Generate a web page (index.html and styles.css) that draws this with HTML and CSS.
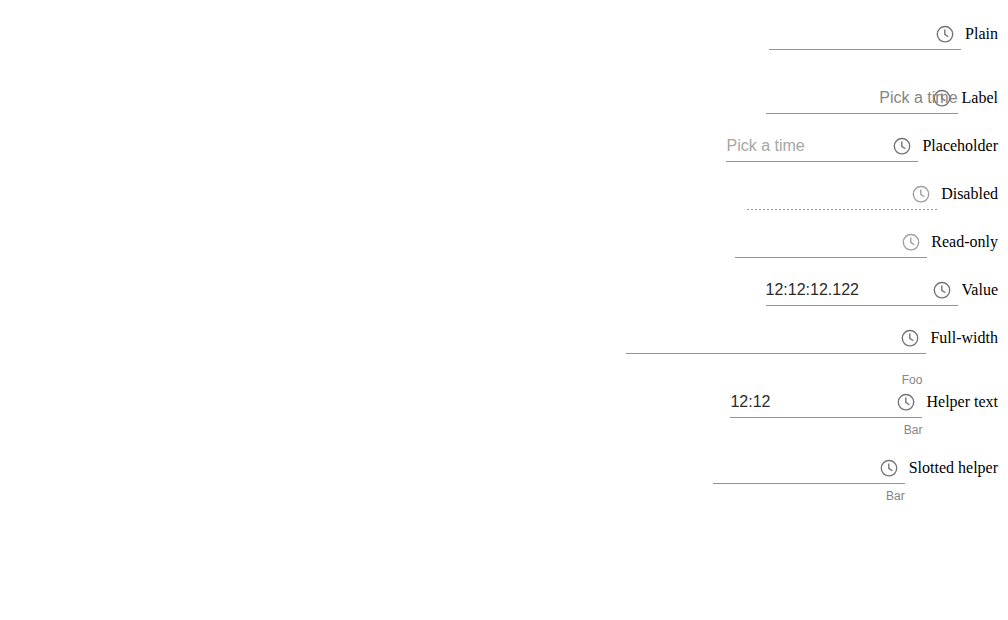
FILE: index.html
```
<!DOCTYPE html>
<html lang="en" dir="rtl">
<head>
<meta charset="utf-8">
<title>Time picker</title>
<link rel="stylesheet" href="styles.css">
</head>
<body>
<svg width="0" height="0" class="defs"><symbol id="clock" viewBox="0 0 20 20"><circle cx="10" cy="10.2" r="7.7"/><path d="M9.8 5.6v4.7l3.5 2.5"/></symbol></svg>
<main class="list">
<div class="row"><span class="name">Plain</span><div class="field"><svg class="icon"><use href="#clock"/></svg></div></div>
<div class="row labelled"><span class="name">Label</span><div class="field"><svg class="icon"><use href="#clock"/></svg><span class="label">Pick a time</span></div></div>
<div class="row"><span class="name">Placeholder</span><div class="field"><svg class="icon"><use href="#clock"/></svg><span class="value placeholder">Pick a time</span></div></div>
<div class="row"><span class="name">Disabled</span><div class="field disabled"><svg class="icon"><use href="#clock"/></svg></div></div>
<div class="row"><span class="name">Read-only</span><div class="field readonly"><svg class="icon"><use href="#clock"/></svg></div></div>
<div class="row"><span class="name">Value</span><div class="field"><svg class="icon"><use href="#clock"/></svg><span class="value">12:12:12.122</span></div></div>
<div class="row"><span class="name">Full-width</span><div class="field full"><svg class="icon"><use href="#clock"/></svg></div></div>
<div class="row helper-row"><span class="name">Helper text</span><div class="field"><svg class="icon"><use href="#clock"/></svg><span class="value">12:12</span><span class="above">Foo</span><span class="helper">Bar</span></div></div>
<div class="row slotted"><span class="name">Slotted helper</span><div class="field"><svg class="icon"><use href="#clock"/></svg><span class="helper">Bar</span></div></div>
</main>
</body>
</html>
```
FILE: styles.css
```
body { margin: 0; background: #fff; font-family: "Liberation Sans", Arial, sans-serif; }
.defs { position: absolute; }
.list { padding: 18px 10px 0; }
.row { display: flex; gap: 4px; height: 32px; margin-bottom: 16px; }
.labelled, .helper-row { margin-top: 32px; }
.slotted { margin-top: 34px; }
.name { font: 16px/32px "Liberation Serif", "Times New Roman", serif; color: #000; white-space: nowrap; }
.field { position: relative; box-sizing: border-box; display: flex; justify-content: space-between; align-items: flex-start; width: 192px; height: 32px; padding: 6px 6px 0 0; border-bottom: 1px solid #949494; }
.full { width: 300px; }
.icon { width: 20px; height: 20px; fill: none; stroke: #757575; stroke-width: 1.4; }
.icon path { stroke-width: 1.1; }
.disabled { border-bottom: 0; background: repeating-linear-gradient(to right, #949494 0 2px, transparent 2px 4px) 2px 100% / 190px 1px no-repeat; }
.disabled .icon, .readonly .icon { stroke: #a0a0a0; }
.value { direction: ltr; font-size: 16px; line-height: 20px; color: #2b2b2b; }
.placeholder { color: #a6a6a6; }
.label { position: absolute; right: 0; top: 6px; font-size: 16px; line-height: 20px; color: #858585; }
.above, .helper { position: absolute; font-size: 12px; line-height: 14px; color: #858585; }
.above { right: 0; top: -13px; }
.helper { right: 0; top: 37px; }
```
